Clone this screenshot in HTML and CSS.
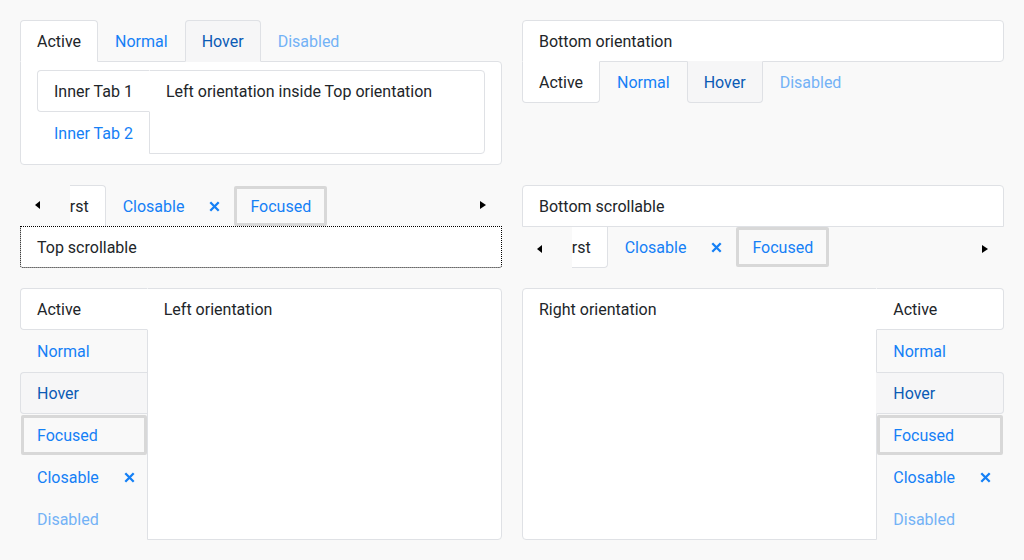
FILE: index.html
```html
<!DOCTYPE html>
<html>
<head>
<meta charset="utf-8">
<link rel="stylesheet" href="styles.css">
</head>
<body>
<div class="page">
  <div class="tabset top">
    <div class="tablist">
      <div class="tab active">Active</div>
      <div class="tab">Normal</div>
      <div class="tab hover">Hover</div>
      <div class="tab disabled">Disabled</div>
    </div>
    <div class="panel outer">
      <div class="tabset left">
        <div class="tablist">
          <div class="tab active">Inner Tab 1</div>
          <div class="tab">Inner Tab 2</div>
        </div>
        <div class="panel">Left orientation inside Top orientation</div>
      </div>
    </div>
  </div>

  <div class="tabset bottom">
    <div class="panel">Bottom orientation</div>
    <div class="tablist">
      <div class="tab active">Active</div>
      <div class="tab">Normal</div>
      <div class="tab hover">Hover</div>
      <div class="tab disabled">Disabled</div>
    </div>
  </div>

  <div class="tabset top scrollable">
    <div class="scrollbar">
      <div class="arrow-btn prev"><span class="arrow left-arrow"></span></div>
      <div class="viewport">
        <div class="strip">
          <div class="tab active">First</div>
          <div class="tab">Closable<span class="close"><svg width="11" height="11" viewBox="0 0 11 11"><path d="M1.3 1.3L9.7 9.7M9.7 1.3L1.3 9.7" stroke="currentColor" stroke-width="2.3" fill="none"/></svg></span></div>
          <div class="tab focused">Focused</div>
        </div>
      </div>
      <div class="arrow-btn next"><span class="arrow right-arrow"></span></div>
    </div>
    <div class="panel dotted">Top scrollable</div>
  </div>

  <div class="tabset bottom scrollable">
    <div class="panel">Bottom scrollable</div>
    <div class="scrollbar">
      <div class="arrow-btn prev"><span class="arrow left-arrow"></span></div>
      <div class="viewport">
        <div class="strip">
          <div class="tab active">First</div>
          <div class="tab">Closable<span class="close"><svg width="11" height="11" viewBox="0 0 11 11"><path d="M1.3 1.3L9.7 9.7M9.7 1.3L1.3 9.7" stroke="currentColor" stroke-width="2.3" fill="none"/></svg></span></div>
          <div class="tab focused">Focused</div>
        </div>
      </div>
      <div class="arrow-btn next"><span class="arrow right-arrow"></span></div>
    </div>
  </div>

  <div class="tabset left big">
    <div class="tablist">
      <div class="tab active">Active</div>
      <div class="tab">Normal</div>
      <div class="tab hover">Hover</div>
      <div class="tab focused">Focused</div>
      <div class="tab">Closable<span class="close"><svg width="11" height="11" viewBox="0 0 11 11"><path d="M1.3 1.3L9.7 9.7M9.7 1.3L1.3 9.7" stroke="currentColor" stroke-width="2.3" fill="none"/></svg></span></div>
      <div class="tab disabled">Disabled</div>
    </div>
    <div class="panel">Left orientation</div>
  </div>

  <div class="tabset right big">
    <div class="panel">Right orientation</div>
    <div class="tablist">
      <div class="tab active">Active</div>
      <div class="tab">Normal</div>
      <div class="tab hover">Hover</div>
      <div class="tab focused">Focused</div>
      <div class="tab">Closable<span class="close"><svg width="11" height="11" viewBox="0 0 11 11"><path d="M1.3 1.3L9.7 9.7M9.7 1.3L1.3 9.7" stroke="currentColor" stroke-width="2.3" fill="none"/></svg></span></div>
      <div class="tab disabled">Disabled</div>
    </div>
  </div>
</div>
</body>
</html>
```

FILE: styles.css
```css
* { box-sizing: border-box; }

body {
  margin: 0;
  padding: 20px;
  background: #f9f9f9;
  font-family: Roboto, "Liberation Sans", sans-serif;
  font-size: 16px;
  line-height: 24px;
  color: #212529;
}

.page {
  display: grid;
  grid-template-columns: 482px 482px;
  gap: 20px;
  align-items: start;
}

.tablist { display: flex; }

.tab {
  display: flex;
  align-items: center;
  padding: 9px 16px 7px;
  border: 1px solid transparent;
  color: #1580f6;
  white-space: nowrap;
}

.tab.active {
  background: #fff;
  color: #212529;
  border-color: #dfe1e5;
  position: relative;
  z-index: 1;
}

.tab.hover {
  background: #f6f6f7;
  color: #0b5bb5;
  border-color: #dfe1e5;
}

.tab.disabled { color: #73b2f6; }

.tab.focused {
  box-shadow: inset 0 0 0 3px #d8d8d8;
  border-radius: 3px;
}

.close {
  display: flex;
  margin-left: 25px;
  margin-right: -4px;
  margin-top: -2px;
  color: #1580f6;
}

.panel {
  background: #fff;
  border: 1px solid #dfe1e5;
  padding: 9px 16px 7px;
}

/* top orientation */
.top > .tablist .tab,
.top .strip .tab { border-radius: 4px 4px 0 0; }
.top > .tablist .tab { margin-bottom: -1px; }
.top > .tablist .tab.active { border-bottom-color: #fff; }
.top > .tablist .tab.hover { border-bottom-color: transparent; }
.top > .panel { border-radius: 0 4px 4px 4px; }
.top > .panel.outer { padding: 8px 16px 10px; }

/* bottom orientation */
.bottom > .tablist .tab,
.bottom .strip .tab { border-radius: 0 0 4px 4px; }
.bottom > .tablist .tab { margin-top: -1px; }
.bottom > .tablist .tab.active { border-top-color: #fff; }
.bottom > .tablist .tab.hover { border-top-color: transparent; }
.bottom > .panel { border-radius: 4px 4px 4px 0; }

/* left orientation */
.left, .right { display: flex; }
.left > .tablist, .right > .tablist { flex-direction: column; }
.left > .tablist .tab { border-radius: 4px 0 0 4px; margin-right: -1px; }
.left > .tablist .tab.active { border-right-color: #fff; }
.left > .tablist .tab.hover { border-right-color: transparent; }
.left > .panel { flex: 1; border-radius: 0 4px 4px 0; }

/* right orientation */
.right > .tablist .tab { border-radius: 0 4px 4px 0; margin-left: -1px; }
.right > .tablist .tab.active { border-left-color: #fff; }
.right > .tablist .tab.hover { border-left-color: transparent; }
.right > .panel { flex: 1; border-radius: 4px 0 0 4px; }

.big .tab.focused { border-radius: 3px; }

/* scrollable */
.scrollbar {
  display: flex;
  height: 42px;
}
.scrollable.top .scrollbar { margin-bottom: -1px; }
.scrollable.bottom .scrollbar { margin-top: -1px; }
.scrollable > .panel { position: relative; z-index: 2; }
.scrollable.top > .panel { border-radius: 0 0 3px 3px; }
.scrollable.bottom > .panel { border-radius: 4px 4px 0 0; }

.panel.dotted { border: 1px dotted #000; }

.arrow-btn {
  width: 50px;
  flex: none;
  display: flex;
  align-items: center;
}
.arrow-btn.prev { padding-left: 15px; }
.arrow-btn.next { justify-content: flex-end; padding-right: 16px; }
.scrollable.top .arrow-btn { padding-bottom: 3px; }
.scrollable.bottom .arrow-btn { padding-top: 3px; }

.arrow {
  width: 0;
  height: 0;
  border-top: 4px solid transparent;
  border-bottom: 4px solid transparent;
}
.left-arrow { border-right: 5px solid #000; }
.right-arrow { border-left: 6px solid #000; }

.viewport {
  flex: 1;
  overflow: hidden;
}
.strip {
  display: flex;
  margin-left: -30px;
}
.strip .tab { height: 42px; }
.scrollable.top .strip .tab.active { border-bottom-color: #fff; }
.scrollable.bottom .strip .tab.active { border-top-color: #fff; }
.strip .tab.focused { border-radius: 3px; }
```
